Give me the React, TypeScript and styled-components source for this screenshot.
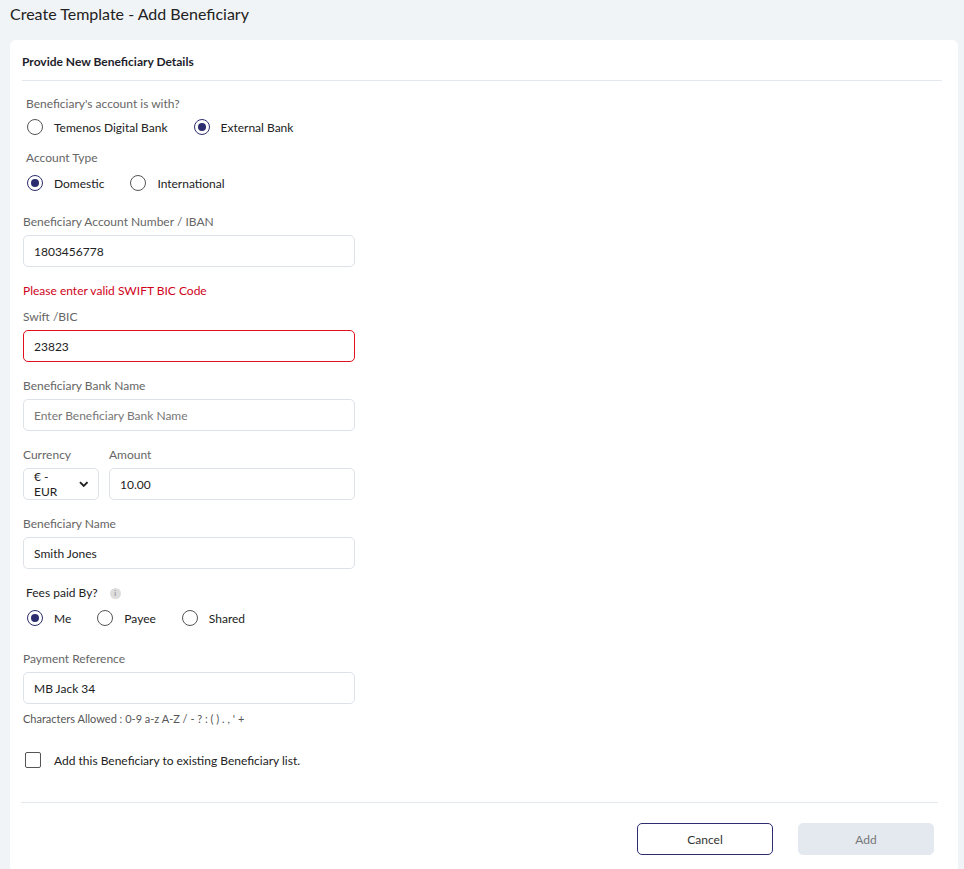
import React from "react";
import styled, { createGlobalStyle } from "styled-components";

const Global = createGlobalStyle`
  body { margin:0; background:#f1f4f7; font-family: Lato, "Open Sans", sans-serif; color:#1d1d2b; }
`;
const Page = styled.div`padding:0 6px 0 10px; height:869px; overflow:hidden;`;
const Title = styled.h1`margin:0; font-size:16px; font-weight:400; padding:4px 0 0 0; height:36px; color:#222;`;
const Card = styled.div`background:#fff; border-radius:6px; padding:0 16px 0 12px; min-height:840px;`;
const Head = styled.div`font-size:12px; font-weight:700; padding:14px 0 0 0; height:26px; border-bottom:1px solid #e3e8ef;`;
const Body = styled.div`padding:15px 0 0 1px; display:flex; flex-direction:column;`;
const Label = styled.div<{ $mt?: number; $dark?: boolean }>`font-size:12px; color:${p => p.$dark ? "#222" : "#666"}; margin-top:${p => p.$mt ?? 0}px; line-height:16px; display:flex; align-items:center; gap:12px;`;
const RadioRow = styled.div<{ $mt?: number }>`display:flex; gap:26px; margin-top:${p => p.$mt ?? 0}px; padding-left:4px;`;
const RadioItem = styled.label`display:flex; align-items:center; gap:11px; font-size:12px; color:#222; height:18px;`;
const Circle = styled.span<{ $on?: boolean }>`width:14px; height:14px; border-radius:50%; border:1.5px solid ${p => p.$on ? "#2b2d6e" : "#555"}; display:flex; align-items:center; justify-content:center;
  &::after { content:""; width:8px; height:8px; border-radius:50%; background:${p => p.$on ? "#2b2d6e" : "transparent"}; }`;
const Input = styled.div<{ $err?: boolean; $ph?: boolean; $w?: number }>`box-sizing:border-box; width:${p => p.$w ?? 332}px; height:32px; border:1px solid ${p => p.$err ? "#e0101e" : "#dde2e8"}; border-radius:5px; display:flex; align-items:center; padding:0 10px; font-size:12px; color:${p => p.$ph ? "#777" : "#222"}; margin-top:5px;`;
const Error = styled.div`color:#d0021b; font-size:12px; margin-top:16px;`;
const Row = styled.div`display:flex; gap:10px; margin-top:16px;`;
const Col = styled.div``;
const Info = styled.span`width:11px; height:11px; border-radius:50%; background:#ddd; color:#888; font-size:8px; display:inline-flex; align-items:center; justify-content:center;`;
const Note = styled.div`font-size:11px; color:#555; margin-top:8px;`;
const Check = styled.label`display:flex; align-items:center; gap:13px; font-size:12px; color:#222; margin-top:27px; padding-left:2px;`;
const Box = styled.span`width:14px; height:14px; border:1.5px solid #555; border-radius:2px;`;
const Footer = styled.div`margin:34px 4px 0 -2px; border-top:1px solid #e3e8ef; display:flex; justify-content:flex-end; gap:25px; padding:20px 4px 0 0;`;
const Btn = styled.button<{ $primary?: boolean }>`width:136px; height:32px; border-radius:5px; font-family:inherit; font-size:12px; border:1px solid ${p => p.$primary ? "#e4e9f0" : "#2b2d6e"}; background:${p => p.$primary ? "#e4e9f0" : "#fff"}; color:${p => p.$primary ? "#777" : "#333"};`;

const Radio = ({ on, children }: { on?: boolean; children: React.ReactNode }) => (
  <RadioItem><Circle $on={on} />{children}</RadioItem>
);

export default function App() {
  return (
    <Page>
      <Global />
      <Title>Create Template - Add Beneficiary</Title>
      <Card>
        <Head>Provide New Beneficiary Details</Head>
        <Body>
          <Label style={{ paddingLeft: 3 }}>Beneficiary's account is with?</Label>
          <RadioRow $mt={6}><Radio>Temenos Digital Bank</Radio><Radio on>External Bank</Radio></RadioRow>
          <Label $mt={14} style={{ paddingLeft: 3 }}>Account Type</Label>
          <RadioRow $mt={8}><Radio on>Domestic</Radio><Radio>International</Radio></RadioRow>
          <Label $mt={22}>Beneficiary Account Number / IBAN</Label>
          <Input>1803456778</Input>
          <Error>Please enter valid SWIFT BIC Code</Error>
          <Label $mt={11}>Swift /BIC</Label>
          <Input $err>23823</Input>
          <Label $mt={16}>Beneficiary Bank Name</Label>
          <Input $ph>Enter Beneficiary Bank Name</Input>
          <Row>
            <Col><Label>Currency</Label><Input $w={76}>€ - EUR&nbsp;&nbsp;<svg width="10" height="8" viewBox="0 0 10 8"><path d="M1 2l4 4 4-4" stroke="#222" strokeWidth="2" fill="none" /></svg></Input></Col>
            <Col><Label>Amount</Label><Input $w={246}>10.00</Input></Col>
          </Row>
          <Label $mt={16}>Beneficiary Name</Label>
          <Input>Smith Jones</Input>
          <Label $mt={16} $dark style={{ paddingLeft: 3 }}>Fees paid By? <Info>i</Info></Label>
          <RadioRow $mt={8}><Radio on>Me</Radio><Radio>Payee</Radio><Radio>Shared</Radio></RadioRow>
          <Label $mt={24}>Payment Reference</Label>
          <Input>MB Jack 34</Input>
          <Note>Characters Allowed : 0-9 a-z A-Z / - ? : ( ) . , ' +</Note>
          <Check><Box />Add this Beneficiary to existing Beneficiary list.</Check>
          <Footer><Btn>Cancel</Btn><Btn $primary>Add</Btn></Footer>
        </Body>
      </Card>
    </Page>
  );
}
